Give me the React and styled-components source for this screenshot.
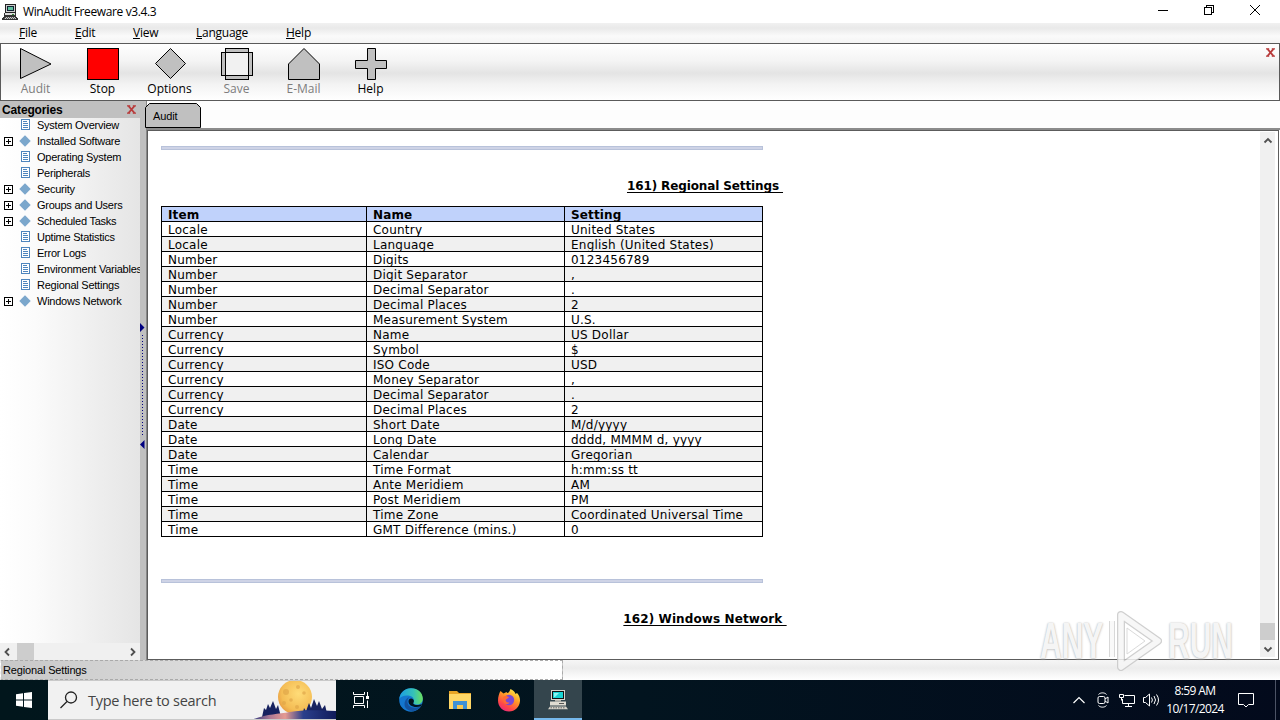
import React from "react";
import styled, { createGlobalStyle } from "styled-components";

const GlobalStyle = createGlobalStyle`
  * {
    box-sizing: border-box;
  }
  body {
    margin: 0;
    overflow: hidden;
    background: #fff;
  }
`;

const uiFont = `"Liberation Sans", Arial, sans-serif`;
const segoe = `"Open Sans", "Noto Sans", sans-serif`;
const verdana = `"DejaVu Sans", Verdana, sans-serif`;

const Desktop = styled.div`
  position: relative;
  display: flex;
  flex-direction: column;
  width: 1280px;
  height: 720px;
  overflow: hidden;
  color: #000;
  background: #fff;
  font-family: ${segoe};
  font-size: 12px;
  white-space: nowrap;
`;

/* title bar */

const TitleBar = styled.header`
  display: flex;
  align-items: center;
  height: 23px;
  padding-left: 2px;
`;

const Title = styled.h1`
  flex: 1;
  margin: 0 0 0 5px;
  font-size: 12px;
  font-weight: 400;
  line-height: 23px;
  letter-spacing: ${(p) => p.$spacing}px;
`;

const WindowButtons = styled.div`
  display: flex;
  align-items: center;
  padding: 0 2px 3px 0;
`;

const WindowButton = styled.button`
  display: flex;
  align-items: center;
  justify-content: center;
  width: 46px;
  height: 20px;
  padding: 0;
  border: 0;
  background: none;
`;

/* menu bar */

const MenuBar = styled.nav`
  display: flex;
  height: 20px;
  padding-left: 19px;
  background: linear-gradient(#f1f1f1, #e9e9e9 25%, #fafafa 65%, #f4f4f4);
`;

const MenuItem = styled.span`
  width: ${(p) => p.$width}px;
  line-height: 20px;
  letter-spacing: ${(p) => p.$spacing}px;
  &::first-letter {
    text-decoration: underline;
  }
`;

/* toolbar */

const ToolBar = styled.div`
  display: flex;
  height: 58px;
  padding: 3px 4px 0 1px;
  border: 1px solid #5a5a5a;
  background: linear-gradient(#fff, #f4f4f4 30%, #e4e4e4 52%, #f3f3f3 72%, #fff);
`;

const ToolButton = styled.button`
  display: flex;
  flex-direction: column;
  align-items: center;
  width: 67px;
  height: 52px;
  padding: 0;
  border: 0;
  background: none;
  color: ${(p) => (p.$off ? "#7d7d7d" : "#000")};
  font-family: ${segoe};
  font-size: 12px;
  line-height: 15px;
  letter-spacing: ${(p) => p.$spacing || 0}px;
`;

const ToolClose = styled.span`
  margin: 1px 0 0 auto;
`;

/* body */

const Body = styled.main`
  display: flex;
  height: 559px;
`;

const SidePanel = styled.aside`
  display: flex;
  flex-direction: column;
  width: 140px;
`;

const SideHeader = styled.div`
  display: flex;
  align-items: center;
  justify-content: space-between;
  height: 17px;
  padding: 0 4px 0 2px;
  background: #c0c0c0;
  font: bold 12px ${uiFont};
  letter-spacing: -0.15px;
`;

const Tree = styled.ul`
  flex: 1;
  margin: 0;
  padding: 0;
  overflow: hidden;
  list-style: none;
  background: linear-gradient(to right, #fff, #fbfbfb 25%, #e5e5e5);
`;

const TreeRow = styled.li`
  display: flex;
  align-items: center;
  height: 16px;
  font: 11px ${uiFont};
  letter-spacing: ${(p) => p.$spacing}px;

  &:first-child {
    margin-top: -1px;
  }
`;

const TreeToggle = styled.span`
  display: flex;
  flex: none;
  width: 19px;
  padding-left: 4px;
`;

const TreeIcon = styled.span`
  display: flex;
  flex: none;
  width: 18px;
`;

const HorizontalScroll = styled.div`
  display: flex;
  align-items: center;
  height: 17px;
  background: #f0f0f0;
`;

const ScrollArrow = styled.span`
  display: flex;
  align-items: center;
  justify-content: center;
  width: 16px;
  height: 17px;
`;

const ThumbH = styled.span`
  width: 17px;
  height: 17px;
  margin: 0 auto 0 1px;
  background: #cdcdcd;
`;

const Splitter = styled.div`
  width: 6px;
  padding-top: 222px;
  background: #c0c0c0;
`;

const Document = styled.section`
  display: flex;
  flex-direction: column;
  flex: 1;
  min-width: 0;
  border-left: 1px solid #888;
`;

const TabBar = styled.div`
  display: flex;
  align-items: flex-end;
  height: 29px;
  border-bottom: 2px solid #8c8c8c;
  background: #fdfdfd;
`;

const Tab = styled.div`
  position: relative;
  display: flex;
  margin-left: -2px;

  span {
    position: absolute;
    left: 8px;
    top: 7px;
    font: 11px ${uiFont};
    letter-spacing: -0.1px;
  }
`;

const ReportFrame = styled.div`
  display: flex;
  flex: 1;
  margin-right: 1px;
  border: 1px solid #5c5c5c;
`;

const Report = styled.article`
  flex: 1;
  height: 528px;
  padding: 15px 0 0 13px;
  overflow: hidden;
  background: #fff;
  font-family: ${verdana};
`;

const Rule = styled.hr`
  width: 602px;
  height: 4px;
  margin: 0;
  border: 1px solid #b8c2da;
  background: #ced3e6;
`;

const SectionTitle = styled.h2`
  width: 1088px;
  margin: 29px 0 0;
  font-size: 12px;
  font-weight: 700;
  line-height: 15px;
  text-align: center;
  text-decoration: underline;
  text-underline-offset: 2px;
  text-decoration-skip-ink: none;
  white-space: pre;
  letter-spacing: ${(p) => p.$spacing}px;
`;

const Table = styled.div`
  width: 602px;
  margin: 12px 0 42px;
  border: 1px solid #000;
  border-bottom: 0;
`;

const TableRow = styled.div`
  display: grid;
  grid-template-columns: 204px 198px 198px;
  height: 15px;
  border-bottom: 1px solid #000;
  background: ${(p) => (p.$head ? "#c0d2fb" : p.$shaded ? "#f0f0f0" : "#fff")};
  font-size: 12px;
  font-weight: ${(p) => (p.$head ? 700 : 400)};
  line-height: 16px;
  letter-spacing: ${(p) => (p.$head ? 0.15 : 0.22)}px;

  span {
    height: 14px;
    padding-left: 6px;
  }
  span + span {
    border-left: 1px solid #000;
  }
`;

const VerticalScroll = styled.div`
  display: flex;
  flex-direction: column;
  width: 15px;
  margin: 1px 3px 2px 0;
  background: #f0f0f0;
`;

const ThumbV = styled.span`
  height: 17px;
  margin-top: auto;
  background: #cdcdcd;
`;

/* status bar */

const StatusBar = styled.footer`
  height: 20px;
  background: linear-gradient(#f6f6f6, #ececec 40%, #fff);
`;

const StatusText = styled.div`
  width: 563px;
  height: 20px;
  padding-left: 2px;
  border: 1px dashed #aaa;
  border-left-color: #eee;
  background: linear-gradient(to right, #c8c8c8, #fff);
  font: 11px/18px ${uiFont};
  letter-spacing: -0.15px;
`;

/* task bar */

const TaskBar = styled.div`
  display: flex;
  height: 40px;
  background: linear-gradient(to right, #01161c, #02141f 50%, #030a1c);
  color: #fff;
`;

const TaskButton = styled.button`
  display: flex;
  align-items: center;
  justify-content: center;
  width: ${(p) => p.$width}px;
  height: 40px;
  padding: 0;
  border: 0;
  background: ${(p) => (p.$active ? "#34454d" : "none")};
  box-shadow: ${(p) => (p.$active ? "inset 0 -2px #76b9ed" : "none")};
`;

const SearchBox = styled.div`
  display: flex;
  align-items: center;
  width: 288px;
  height: 40px;
  padding-left: 12px;
  border: solid #c9c9c9;
  border-width: 1px 0 1px 0;
  background: #f1f1f1;
  color: #444;
  font-size: 14.5px;
  letter-spacing: -0.27px;

  span {
    flex: 1;
    margin-left: 10px;
  }
`;

const Tray = styled.div`
  display: flex;
  align-items: center;
  margin-left: auto;
`;

const TrayIcon = styled.span`
  display: flex;
  justify-content: center;
  width: ${(p) => p.$width || 24}px;
`;

const Clock = styled.div`
  width: 64px;
  text-align: center;
  font-size: 12px;
  line-height: 18px;
  letter-spacing: -0.6px;
`;

const ShowDesktop = styled.span`
  width: 5px;
  height: 40px;
  margin-left: 10px;
  border-left: 1px solid #4c5365;
`;

const Watermark = styled.div`
  position: absolute;
  left: 1040px;
  top: 606px;
  display: flex;
  align-items: center;
  color: #f4f4f4;
  font: bold 50px/70px "Liberation Sans", sans-serif;
  text-shadow: 0 0 2px #aaa, 0 1px 3px #ccc;
  opacity: 0.85;

  span {
    width: 67px;
    transform-origin: left;
    transform: scaleX(0.6);
  }
  svg {
    flex: none;
    margin: 0 6px 0 -3px;
  }
`;

const menus = [
  { label: "File", width: 56 },
  { label: "Edit", width: 58 },
  { label: "View", width: 63 },
  { label: "Language", width: 90 },
  { label: "Help", width: 40 },
];

const tools = [
  { label: "Audit", off: true, shape: <path d="M1.5 1.5V31.5L32 17Z" /> },
  { label: "Stop", shape: <rect x="1.5" y="1.5" width="31" height="31" fill="#f00" /> },
  { label: "Options", shape: <path d="M17.5 1.5L32.5 16.5L17.5 31.5L2.5 16.5Z" /> },
  {
    label: "Save",
    off: true,
    shape: (
      <>
        <rect x="1.5" y="5.5" width="31" height="23" />
        <rect x="5.5" y="1.5" width="23" height="31" />
        <rect x="5.5" y="5.5" width="23" height="23" fill="#f1f1f1" />
      </>
    ),
  },
  { label: "E-Mail", off: true, shape: <path d="M1.5 32.5V17L17 1.5L32.5 17V32.5Z" /> },
  {
    label: "Help",
    shape: <path d="M13.5 1.5h8v12h11v8h-11v11h-8v-11h-12v-8h12Z" />,
  },
];

const categories = [
  { label: "System Overview" },
  { label: "Installed Software", group: true },
  { label: "Operating System" },
  { label: "Peripherals" },
  { label: "Security", group: true },
  { label: "Groups and Users", group: true },
  { label: "Scheduled Tasks", group: true },
  { label: "Uptime Statistics" },
  { label: "Error Logs" },
  { label: "Environment Variables" },
  { label: "Regional Settings" },
  { label: "Windows Network", group: true },
];

const settings = [
  ["Locale", "Country", "United States"],
  ["Locale", "Language", "English (United States)"],
  ["Number", "Digits", "0123456789"],
  ["Number", "Digit Separator", ","],
  ["Number", "Decimal Separator", "."],
  ["Number", "Decimal Places", "2"],
  ["Number", "Measurement System", "U.S."],
  ["Currency", "Name", "US Dollar"],
  ["Currency", "Symbol", "$"],
  ["Currency", "ISO Code", "USD"],
  ["Currency", "Money Separator", ","],
  ["Currency", "Decimal Separator", "."],
  ["Currency", "Decimal Places", "2"],
  ["Date", "Short Date", "M/d/yyyy"],
  ["Date", "Long Date", "dddd, MMMM d, yyyy"],
  ["Date", "Calendar", "Gregorian"],
  ["Time", "Time Format", "h:mm:ss tt"],
  ["Time", "Ante Meridiem", "AM"],
  ["Time", "Post Meridiem", "PM"],
  ["Time", "Time Zone", "Coordinated Universal Time"],
  ["Time", "GMT Difference (mins.)", "0"],
];

const ComputerIcon = () => (
  <svg width="16" height="16" viewBox="0 0 16 16" shapeRendering="crispEdges">
    <rect x="3" y="0" width="11" height="9" fill="#222" />
    <rect x="4" y="1" width="9" height="7" fill="#ccc" />
    <rect x="5" y="2" width="7" height="5" fill="#123" />
    <rect x="6" y="3" width="5" height="3" fill="#5fc0a0" />
    <rect x="2" y="9" width="12" height="3" fill="#333" />
    <rect x="3" y="9" width="10" height="2" fill="#ddd" />
    <rect x="10" y="10" width="2" height="1" fill="#383" />
    <path d="M2 12h12l2 3v1H0v-1Z" fill="#333" />
    <path d="M3 13h10l1 2H2Z" fill="#ccc" />
    <path d="M3 13.5h10M2 14.5h12" stroke="#555" strokeDasharray="1 1" />
  </svg>
);

const TaskComputerIcon = () => (
  <svg width="22" height="20" viewBox="0 0 22 20">
    <rect x="4.500" y=".5" width="13" height="9" fill="#111" stroke="#d8d4cc" />
    <rect x="6" y="2" width="10" height="6" fill="#19d3d3" />
    <path d="M7 3h5l-4 4H7Z" fill="#8ff3f0" />
    <rect x="8" y="10" width="6" height="1.500" fill="#b8b4ac" />
    <rect x="3" y="11.500" width="16" height="4" fill="#e0dcd2" />
    <path d="M12 13.500h5" stroke="#555" />
    <path d="M3 16.500h16l2 2.700H1Z" fill="#d8d4ca" />
    <path d="M3.500 17.800h14" stroke="#666" strokeDasharray="1.500 1" />
  </svg>
);

const RedCross = () => (
  <svg width="9" height="9" viewBox="0 0 9 9" style={{ display: "block" }}>
    <path d="M1.500 1L7.500 8M7.500 1L1.500 8" stroke="#b83a3a" strokeWidth="1.900" />
    <path d="M0 .9h3.200M5.800 .9H9M0 8.100h3.200M5.800 8.100H9" stroke="#b83a3a" strokeWidth="1.200" />
  </svg>
);

const PageIcon = () => (
  <svg width="12" height="12" viewBox="0 0 12 12" shapeRendering="crispEdges">
    <path d="M2.500.5h8v10h-8Z" fill="#fff" stroke="#4e85bd" />
    <path d="M4 2.500h4M4 4.500h5M4 6.500h5M4 8.500h5" stroke="#4e85bd" />
  </svg>
);

const GroupIcon = () => (
  <svg width="12" height="12" viewBox="0 0 12 12">
    <path d="M6 .3L11.7 6L6 11.7L.3 6Z" fill="#7ba7cc" />
  </svg>
);

const PlusBox = () => (
  <svg width="9" height="9" viewBox="0 0 9 9" shapeRendering="crispEdges">
    <path d="M.5.5h8v8h-8ZM2 4.5h5M4.5 2v5" fill="none" stroke="#000" />
  </svg>
);

const arrows = {
  left: "M6 1.5L2.5 5L6 8.5",
  right: "M4 1.5L7.5 5L4 8.5",
  up: "M1.5 6.5L5 3L8.5 6.5",
  down: "M1.5 3.5L5 7L8.5 3.5",
};

const Arrow = ({ dir }) => (
  <ScrollArrow>
    <svg width="10" height="10" viewBox="0 0 10 10">
      <path d={arrows[dir]} fill="none" stroke="#505050" strokeWidth="1.8" />
    </svg>
  </ScrollArrow>
);

const MoonArt = () => (
  <svg width="82" height="38" viewBox="0 0 82 38">
    <defs>
      <linearGradient id="hill" x1="0" x2="1">
        <stop offset="0" stopColor="#3a3f80" />
        <stop offset="0.2" stopColor="#b07a94" />
        <stop offset="0.38" stopColor="#e59a92" />
        <stop offset="0.6" stopColor="#2a3f8c" />
        <stop offset="1" stopColor="#101b5a" />
      </linearGradient>
      <radialGradient id="moon" cx="0.6" cy="0.4" r="0.7">
        <stop offset="0" stopColor="#ffdc78" />
        <stop offset="0.7" stopColor="#f4bd55" />
        <stop offset="1" stopColor="#e5963f" />
      </radialGradient>
    </defs>
    <path d="M8 36l2-9 2 2 2-6 2 4 3-7 3 8 2-4 3 12Z" fill="#17225f" />
    <circle cx="41" cy="16" r="17" fill="url(#moon)" />
    <g fill="#dfa548" opacity="0.65">
      <circle cx="32" cy="11" r="3" />
      <circle cx="44" cy="6" r="2" />
      <circle cx="37" cy="19" r="1.8" />
      <circle cx="50" cy="12" r="1.8" />
      <circle cx="30" cy="22" r="2" />
      <circle cx="43" cy="26" r="2" />
    </g>
    <path d="M48 36l2-9 2 3 3-8 2 5 3-9 3 7 2-5 3 8 3-4 3 12Z" fill="#17225f" />
    <path d="M0 38C14 33 24 33 36 31S60 29 82 30V38Z" fill="url(#hill)" />
  </svg>
);

const EdgeIcon = () => (
  <svg width="24" height="24" viewBox="0 0 24 24">
    <defs>
      <linearGradient id="edgeTop" x1="0" x2="1">
        <stop offset="0" stopColor="#1b9de2" />
        <stop offset="0.6" stopColor="#35c1b8" />
        <stop offset="1" stopColor="#6be05e" />
      </linearGradient>
    </defs>
    <circle cx="12" cy="12" r="11.8" fill="#1477cf" />
    <path d="M.3 11C1 4.500 6 .2 12 .2C19 .2 23.800 5 23.800 10.500C23.800 14.500 21 16.500 17.800 16.500C15 16.500 14 15.500 14.500 14.500C15.500 12 14.500 8.500 10.500 7.800C6 7 1.500 8.500 .3 11Z" fill="url(#edgeTop)" />
    <path d="M8.500 13C8 18 13 21.500 21.800 18.600C18 24.500 9 24.500 6 19C4.500 14 7 10 10.500 9.200C8.800 10.500 8.600 12 8.500 13Z" fill="#1353a0" />
    <path d="M14.300 11.500C12 9.500 9.500 11 9.500 13.500C9.500 17.500 15 20.500 22 18.300L23 16C20 17.500 14 17.500 14.200 15C15 14 15.200 12.500 14.300 11.500Z" fill="#02141f" />
  </svg>
);

const FolderIcon = () => (
  <svg width="22" height="20" viewBox="0 0 22 20">
    <path d="M0 1h8l2 2h12v4H0Z" fill="#e8a526" />
    <path d="M0 4h22v15H0Z" fill="#ffd766" />
    <path d="M4 11h14v8h-4v-4H8v4H4Z" fill="#3e91d4" />
    <path d="M8 15h6v4H8Z" fill="#f7c84f" />
  </svg>
);

const FirefoxIcon = () => (
  <svg width="24" height="24" viewBox="0 0 24 24">
    <defs>
      <linearGradient id="fox" x1="0.8" y1="0" x2="0.2" y2="1">
        <stop offset="0" stopColor="#fff04a" />
        <stop offset="0.4" stopColor="#ff9826" />
        <stop offset="0.75" stopColor="#ff4548" />
        <stop offset="1" stopColor="#e52585" />
      </linearGradient>
    </defs>
    <path d="M3.500 3L6.500 5.500L9.500 4C10.500 6 12 5 13.500 1C17 2.500 18 4.500 18.500 6L20 5C22 7 23.200 10 23 13C22.500 19 18 23.500 12 23.500S1 19 1 12.500C1 9 2.200 5 3.500 3Z" fill="url(#fox)" />
    <circle cx="12" cy="12" r="5.200" fill="#7b48d4" />
    <path d="M6 9C8 7.500 10.500 8 12 9.500L9 11.500C8 13 10 15 12.500 14.500C10.500 18 5 16 6 9Z" fill="#ff6a35" />
  </svg>
);

const TaskViewIcon = () => (
  <svg width="18" height="18" viewBox="0 0 18 18" fill="none" stroke="#fff">
    <path d="M1.500 1v2.500h11V1M1.500 17v-2.500h11V17M2.500 5.500h9v7h-9ZM15.500 1v4M15.500 9.500V17" />
    <rect x="14.500" y="5.500" width="2" height="2" fill="#fff" />
  </svg>
);

export default function App() {
  return (
    <>
      <GlobalStyle />
      <Desktop>
        <TitleBar>
          <ComputerIcon />
          <Title $spacing={-0.38}>WinAudit Freeware v3.4.3</Title>
          <WindowButtons>
            <WindowButton>
              <svg width="10" height="10"><path d="M0 5.5h10" stroke="#000" /></svg>
            </WindowButton>
            <WindowButton>
              <svg width="10" height="10" fill="none" stroke="#000" shapeRendering="crispEdges">
                <path d="M.5 2.500h7v7h-7ZM2.500 2.500v-2h7v7h-2" />
              </svg>
            </WindowButton>
            <WindowButton>
              <svg width="10" height="10"><path d="M0 0l10 10M10 0L0 10" stroke="#000" /></svg>
            </WindowButton>
          </WindowButtons>
        </TitleBar>

        <MenuBar>
          {menus.map((m) => (
            <MenuItem key={m.label} $width={m.width} $spacing={-0.25}>{m.label}</MenuItem>
          ))}
        </MenuBar>

        <ToolBar>
          {tools.map((t) => (
            <ToolButton key={t.label} $off={t.off}>
              <svg width="34" height="34" viewBox="0 0 34 34" fill="#c0c0c0" stroke="#000">
                {t.shape}
              </svg>
              {t.label}
            </ToolButton>
          ))}
          <ToolClose><RedCross /></ToolClose>
        </ToolBar>

        <Body>
          <SidePanel>
            <SideHeader>
              Categories
              <RedCross />
            </SideHeader>
            <Tree>
              {categories.map((c) => (
                <TreeRow key={c.label} $spacing={-0.24}>
                  <TreeToggle>{c.group && <PlusBox />}</TreeToggle>
                  <TreeIcon>{c.group ? <GroupIcon /> : <PageIcon />}</TreeIcon>
                  {c.label}
                </TreeRow>
              ))}
            </Tree>
            <HorizontalScroll>
              <Arrow dir="left" />
              <ThumbH />
              <Arrow dir="right" />
            </HorizontalScroll>
          </SidePanel>
          <Splitter>
            <svg width="5" height="126" viewBox="0 0 5 126" fill="#000080">
              <path d="M0 0L4.500 4.500L0 9ZM4.500 117V126L0 121.500Z" />
              <path d="M2.500 12v102" stroke="#000080" strokeDasharray="1 2" />
            </svg>
          </Splitter>
          <Document>
            <TabBar>
              <Tab>
                <svg width="56" height="25" viewBox="0 0 56 25">
                  <path d="M.5 24.500V4.500L4.500.5H51.500L55.500 4.500V24.500Z" fill="#c0c0c0" stroke="#000" />
                </svg>
                <span>Audit</span>
              </Tab>
            </TabBar>
            <ReportFrame>
              <Report>
                <Rule />
                <SectionTitle $spacing={-0.12}>{"161) Regional Settings "}</SectionTitle>
                <Table>
                  <TableRow $head>
                    <span>Item</span>
                    <span>Name</span>
                    <span>Setting</span>
                  </TableRow>
                  {settings.map(([item, name, value], i) => (
                    <TableRow key={item + name} $shaded={i % 2 === 1}>
                      <span>{item}</span>
                      <span>{name}</span>
                      <span>{value}</span>
                    </TableRow>
                  ))}
                </Table>
                <Rule />
                <SectionTitle $spacing={0.1}>{"162) Windows Network "}</SectionTitle>
              </Report>
              <VerticalScroll>
                <Arrow dir="up" />
                <ThumbV />
                <Arrow dir="down" />
              </VerticalScroll>
            </ReportFrame>
          </Document>
        </Body>

        <StatusBar>
          <StatusText>Regional Settings</StatusText>
        </StatusBar>

        <TaskBar>
          <TaskButton $width={48}>
            <svg width="16" height="16" viewBox="0 0 16 16" fill="#fff">
              <path d="M0 2.300L7 1.300V7.500H0ZM8 1.100L16 0V7.500H8ZM0 8.500H7V14.700L0 13.700ZM8 8.500H16V16L8 14.900Z" />
            </svg>
          </TaskButton>
          <SearchBox>
            <svg width="18" height="18" viewBox="0 0 18 18" fill="none" stroke="#222" strokeWidth="1.300">
              <circle cx="11" cy="6.500" r="5.500" />
              <path d="M7 10.500L.5 17" />
            </svg>
            <span>Type here to search</span>
            <MoonArt />
          </SearchBox>
          <TaskButton $width={49}><TaskViewIcon /></TaskButton>
          <TaskButton $width={52}><EdgeIcon /></TaskButton>
          <TaskButton $width={46}><FolderIcon /></TaskButton>
          <TaskButton $width={51}><FirefoxIcon /></TaskButton>
          <TaskButton $width={48} $active>
            <TaskComputerIcon />
          </TaskButton>
          <Tray>
            <TrayIcon>
              <svg width="12" height="8" fill="none" stroke="#fff" strokeWidth="1.200"><path d="M.5 7L6 1.500L11.500 7" /></svg>
            </TrayIcon>
            <TrayIcon>
              <svg width="12" height="16" viewBox="0 0 12 16" fill="none" stroke="#fff">
                <rect x="1" y="4.500" width="7" height="7" rx="1.500" />
                <path d="M8 7l3-2v6l-3-2M1.500 2.500C3.500 .3 7.500 .3 9.500 2.500M1.500 13.500C3.500 15.700 7.500 15.700 9.500 13.500" />
              </svg>
            </TrayIcon>
            <TrayIcon>
              <svg width="16" height="16" viewBox="0 0 16 16" fill="none" stroke="#fff">
                <path d="M5.500 3.500h10v8h-12V7M9.500 11.500v3M6 14.500h7M.5 2.500h4v3h-4ZM2.500 5.500v3" />
              </svg>
            </TrayIcon>
            <TrayIcon>
              <svg width="17" height="16" viewBox="0 0 17 16" fill="none" stroke="#fff">
                <path d="M.5 5.500h2l4-3.500v12l-4-3.500h-2ZM8.500 5.500q1.800 2.500 0 5M11 4q3 4 0 8M13.500 2.500q4 5.500 0 11" />
              </svg>
            </TrayIcon>
            <Clock>
              <div>8:59 AM</div>
              <div>10/17/2024</div>
            </Clock>
            <TrayIcon $width={38}>
              <svg width="16" height="16" viewBox="0 0 16 16" fill="none" stroke="#fff">
                <path d="M.5 1.500h15v11h-5l-2.500 2.500l-2.500-2.500h-5Z" />
              </svg>
            </TrayIcon>
            <ShowDesktop />
          </Tray>
        </TaskBar>

        <Watermark>
          <span>ANY</span>
          <svg width="58" height="68" viewBox="0 0 58 68" fill="none" strokeLinejoin="round">
            <path d="M8 50V14" stroke="#d2d2d2" strokeWidth="6" />
            <path d="M8 50V14" stroke="#f8f8f8" strokeWidth="4" />
            <path d="M17 8L54 34L17 60Z" stroke="#c8c8c8" strokeWidth="8" />
            <path d="M17 8L54 34L17 60Z" stroke="#f6f6f6" strokeWidth="5.500" />
            <path d="M23 21v26l18-13Z" fill="#fff" stroke="#d4d4d4" />
          </svg>
          <span>RUN</span>
        </Watermark>
      </Desktop>
    </>
  );
}
